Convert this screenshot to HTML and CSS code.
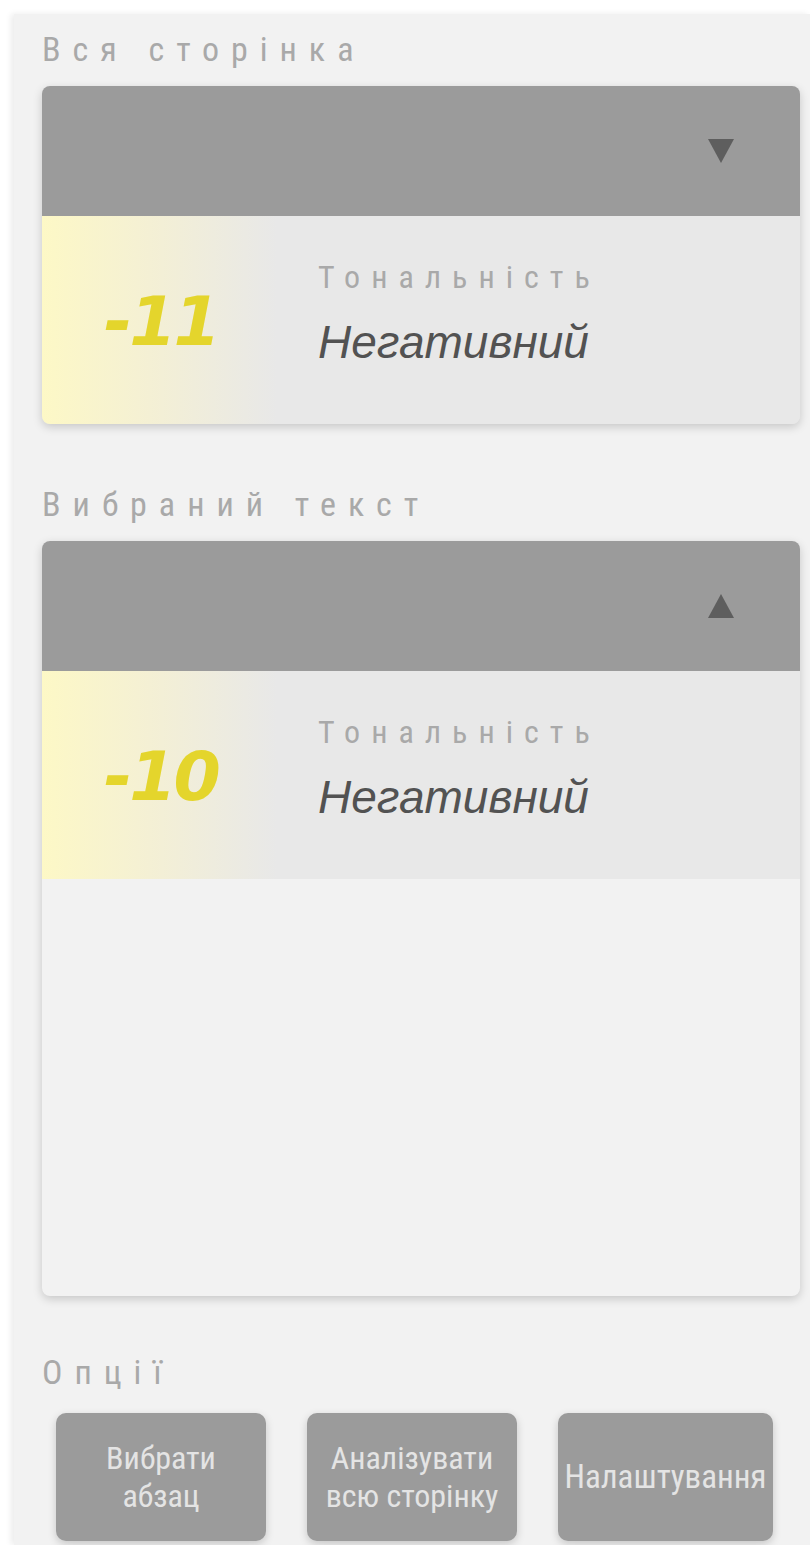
FILE: index.html
```html
<!DOCTYPE html>
<html lang="uk">
<head>
<meta charset="utf-8">
<title>Тональність</title>
<link rel="stylesheet" href="styles.css">
</head>
<body>
<div class="panel">
  <h2 class="section-title">Вся сторінка</h2>
  <div class="card">
    <div class="card-head">
      <svg class="caret" viewBox="0 0 26 24" width="26" height="24"><path d="M0 0H26L13 24Z"/></svg>
    </div>
    <div class="result">
      <div class="score">-11</div>
      <div class="meta">
        <div class="meta-label">Тональність</div>
        <div class="meta-value">Негативний</div>
      </div>
    </div>
  </div>

  <h2 class="section-title second">Вибраний текст</h2>
  <div class="card tall">
    <div class="card-head">
      <svg class="caret" viewBox="0 0 26 24" width="26" height="24"><path d="M13 0L26 24H0Z"/></svg>
    </div>
    <div class="result">
      <div class="score">-10</div>
      <div class="meta">
        <div class="meta-label">Тональність</div>
        <div class="meta-value">Негативний</div>
      </div>
    </div>
    <div class="card-rest"></div>
  </div>

  <h2 class="section-title options">Опції</h2>
  <div class="actions">
    <button class="action">Вибрати<br>абзац</button>
    <button class="action">Аналізувати<br>всю сторінку</button>
    <button class="action wide">Налаштування</button>
  </div>
</div>
</body>
</html>
```

FILE: styles.css
```css
html, body {
  margin: 0;
  background: #ffffff;
}

.panel {
  margin: 14px 0 0 14px;
  min-height: 1531px;
  box-sizing: border-box;
  padding: 16px 10px 0 28px;
  background: #f2f2f2;
  box-shadow: -3px 0 6px rgba(0, 0, 0, 0.08);
  font-family: Roboto, "Noto Sans", sans-serif;
  overflow: hidden;
}

.section-title {
  margin: 0;
  font-weight: 400;
  font-size: 34px;
  font-stretch: 75%;
  line-height: 38px;
  letter-spacing: 12px;
  color: #a9a9a9;
}

.section-title.second {
  margin-top: 61px;
}

.section-title.options {
  margin-top: 57px;
}

.card {
  margin-top: 18px;
  border-radius: 8px;
  overflow: hidden;
  background: #e8e8e8;
  box-shadow: 0 3px 10px rgba(0, 0, 0, 0.18);
}

.card.tall {
  background: #f2f2f2;
}

.card-head {
  height: 130px;
  background: #9b9b9b;
  display: flex;
  align-items: center;
  justify-content: flex-end;
  padding-right: 66px;
}

.caret {
  fill: #5e5e5e;
}

.result {
  height: 208px;
  display: flex;
  align-items: center;
  background: linear-gradient(to right, #fdf8c6 0px, #f3efd6 120px, #e8e8e8 235px);
}

.score {
  width: 238px;
  text-align: center;
  font-family: "DejaVu Sans", Verdana, sans-serif;
  font-weight: 700;
  font-style: italic;
  font-size: 68px;
  color: #e4d52c;
  letter-spacing: -3px;
  padding-top: 2px;
}

.meta {
  margin-left: 38px;
  margin-top: -14px;
}

.meta-label {
  font-size: 32px;
  font-stretch: 75%;
  letter-spacing: 11px;
  color: #a9a9a9;
  line-height: 36px;
}

.meta-value {
  margin-top: 22px;
  font-family: "Liberation Sans", Arial, sans-serif;
  font-style: italic;
  font-size: 46px;
  line-height: 50px;
  color: #525252;
}

.card-rest {
  height: 417px;
}

.actions {
  display: flex;
  gap: 41px;
  margin-top: 22px;
  padding-left: 14px;
}

.action {
  width: 210px;
  height: 128px;
  border: none;
  border-radius: 10px;
  background: #9b9b9b;
  color: #e4e4e4;
  font-family: Roboto, "Noto Sans", sans-serif;
  font-size: 32px;
  font-stretch: 75%;
  line-height: 38px;
  padding: 0;
  white-space: nowrap;
  box-shadow: 0 3px 8px rgba(0, 0, 0, 0.18);
}

.action.wide {
  width: 215px;
  overflow: hidden;
  font-size: 33px;
}
```
